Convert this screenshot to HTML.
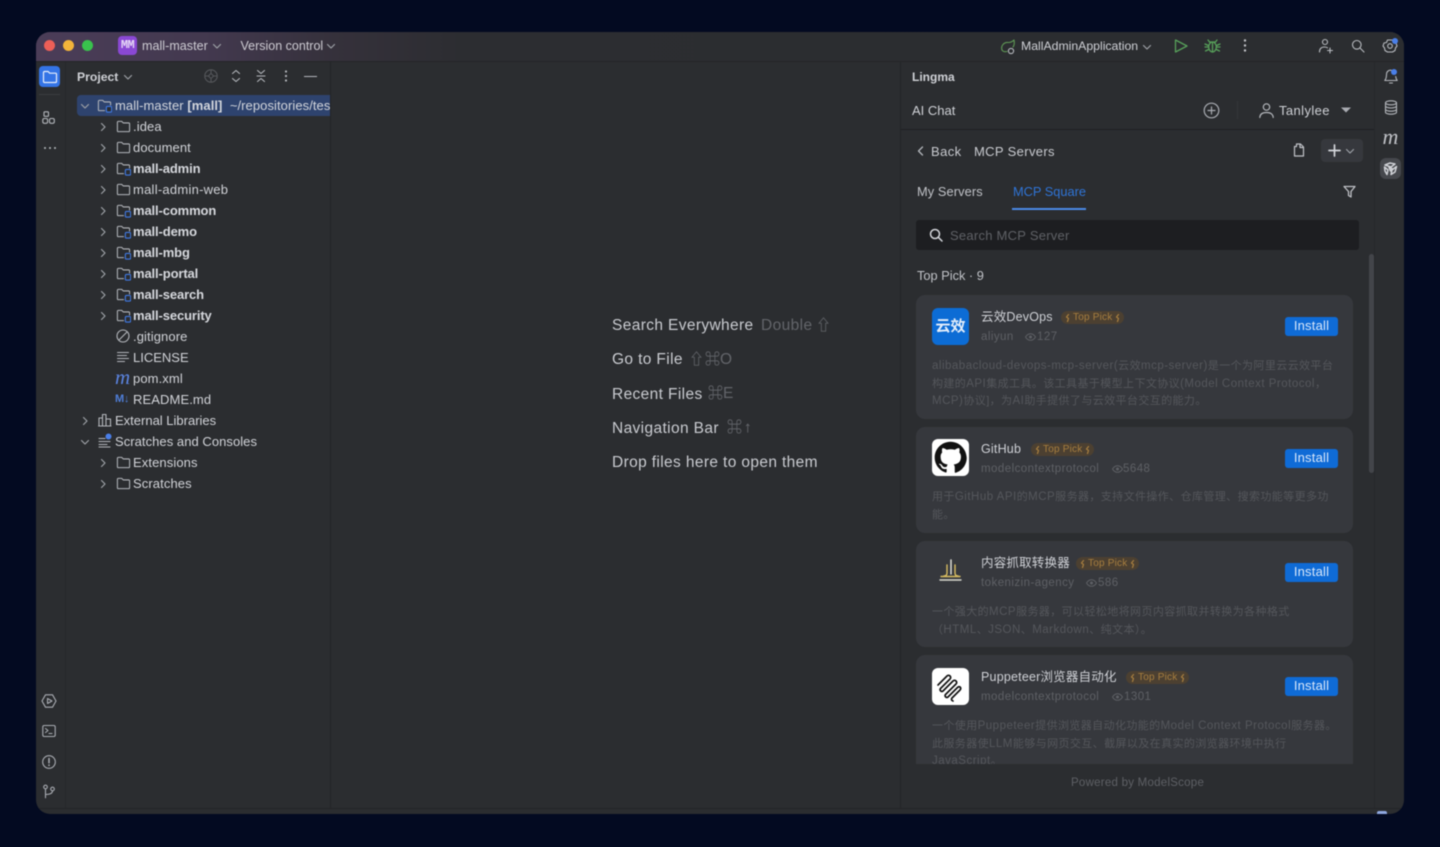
<!DOCTYPE html>
<html lang="en"><head><meta charset="utf-8"><title>mall-master</title>
<style>
html,body{margin:0;padding:0;width:1440px;height:847px;overflow:hidden;background:#030a21}
*{box-sizing:border-box}
body{font-family:"Liberation Sans","Noto Sans CJK SC",sans-serif;color:#d3d5da;font-size:13px}
#w{position:absolute;left:36px;top:32px;width:1368px;height:782px;border-radius:14px;background:#2b2d30;overflow:hidden;filter:blur(.4px)}
.a{position:absolute;white-space:nowrap}
.t{position:absolute;white-space:nowrap;line-height:18px;height:18px}
svg{position:absolute;overflow:visible;fill:none;stroke-linecap:round;stroke-linejoin:round}
.line{position:absolute;background:#1e1f22}
.row{position:absolute;height:21px;line-height:21px;white-space:nowrap;font-size:13px;letter-spacing:.1px;color:#d1d3d8}
.b{font-weight:700;color:#d6d8dd;letter-spacing:-.12px}
.card{position:absolute;left:880px;width:437px;background:#36383d;border-radius:9px}
.logo{position:absolute;left:16px;top:13px;width:37px;height:37px;border-radius:6px;background:#fff;overflow:hidden}
.nm{position:absolute;left:65px;top:13px;line-height:18px;font-size:12.5px;letter-spacing:.2px;color:#cfd1d6;white-space:nowrap}
.pk{position:absolute;top:16px;width:63px;height:13px;border-radius:7px;background:#4c4031;color:#a77e3f;font-size:10px;line-height:13px;padding-left:12px;letter-spacing:.2px;white-space:nowrap}
.pk svg{top:2.5px}
.sub{position:absolute;left:65px;top:34px;line-height:16px;font-size:11.5px;letter-spacing:.45px;color:#5e6065;white-space:nowrap}
.vw{position:absolute;top:34px;line-height:16px;font-size:11.5px;letter-spacing:.45px;color:#5e6065;white-space:nowrap}
.eye{top:38px}
.ins{position:absolute;left:369px;top:22px;width:53px;height:19px;background:#0f6bd6;border-radius:3px;color:#d9e8fb;font-size:13px;line-height:18.5px;text-align:center;letter-spacing:.2px}
.d{position:absolute;left:16px;top:63px;font-size:11px;line-height:17.5px;letter-spacing:.4px;color:#55575c;white-space:nowrap}
.d i{font-style:normal;font-size:11.5px;letter-spacing:.5px}
.k{position:absolute;color:#63656a;font-size:15.5px;line-height:20px;letter-spacing:.4px;white-space:nowrap}
.g{position:absolute;color:#63656a;font-size:15px;line-height:20px;-webkit-text-stroke:.2px #63656a}
.wl{position:absolute;left:576px;font-size:15.5px;letter-spacing:.37px;line-height:20px;color:#c9cbd0;white-space:nowrap}
</style></head><body>
<svg width="0" height="0" style="position:absolute">
<defs>
<symbol id="f" viewBox="0 0 16 16"><path d="M1.5 3.500a1 1 0 0 1 1-1h3.600l1.600 1.700h5.800a1 1 0 0 1 1 1v7.300a1 1 0 0 1-1 1h-11a1 1 0 0 1-1-1z" fill="none" stroke="#b4b7bc" stroke-width="1.100"/></symbol>
<symbol id="m" viewBox="0 0 16 16"><path d="M8 13.500H2.500a1 1 0 0 1-1-1v-9a1 1 0 0 1 1-1h3.600l1.600 1.700h5.800a1 1 0 0 1 1 1v2.300" fill="none" stroke="#b4b7bc" stroke-width="1.100"/><rect x="10" y="9" width="5.600" height="6" rx="1.200" fill="#2b2d30" stroke="#3f78e0" stroke-width="1.200"/></symbol>
<symbol id="r" viewBox="0 0 10 10"><path d="M3.500 1.500 7 5 3.500 8.500" fill="none" stroke="#9da0a6" stroke-width="1.200"/></symbol>
<symbol id="dn" viewBox="0 0 10 10"><path d="M1.500 3.500 5 7l3.500-3.500" fill="none" stroke="#9da0a6" stroke-width="1.200"/></symbol>
<symbol id="e" viewBox="0 0 11 8"><path d="M.5 4C2 1.500 3.500.7 5.500.7S9 1.500 10.500 4C9 6.500 7.500 7.300 5.500 7.300S2 6.500.5 4z" fill="none" stroke="#5e6065"/><circle cx="5.500" cy="4" r="1.500" fill="#5e6065"/></symbol>
<symbol id="fl" viewBox="0 0 6 8"><path d="M3.500.5 1.500 3l2 1.500-1 3" fill="none" stroke="#a77e3f" stroke-width="1.200"/></symbol>
</defs></svg>
<div id="w">
<!-- title bar -->
<div class="a" style="left:0;top:0;width:1368px;height:29px;background:linear-gradient(90deg,#4b3d58 0,#43394f 170px,#35313b 300px,#2c2d31 430px,#2b2d30 100%)"></div>
<div class="line" style="left:0;top:29px;width:1368px;height:1px;background:#242528"></div>
<div class="a" style="left:8px;top:8px;width:11px;height:11px;border-radius:50%;background:#ec5f57"></div>
<div class="a" style="left:27px;top:8px;width:11px;height:11px;border-radius:50%;background:#f3b43a"></div>
<div class="a" style="left:46px;top:8px;width:11px;height:11px;border-radius:50%;background:#39c24d"></div>
<div class="a" style="left:82px;top:4px;width:19px;height:19px;border-radius:4px;background:#8a48d4;color:#e6d8f6;font:700 12px/19px 'Liberation Mono',monospace;text-align:center;letter-spacing:-.6px">MM</div>
<div class="t" style="left:106px;top:5px;font-size:12.5px;color:#cdcbd2;letter-spacing:.05px">mall-master</div>
<svg style="left:176px;top:9px" width="10" height="10"><use href="#dn"/></svg>
<div class="t" style="left:204.500px;top:5px;font-size:12.5px;color:#cdcbd2;letter-spacing:0">Version control</div>
<svg style="left:290px;top:9px" width="10" height="10"><use href="#dn"/></svg>
<svg style="left:964px;top:7px" width="16" height="16" viewBox="0 0 16 16" stroke="#5f9a55" stroke-width="1.100"><path d="M2 11C.5 7 4 3 8 3.500 10 3.600 12 3 14 1c.8 4-.2 6-1 7"/><circle cx="11" cy="12" r="2.600" stroke="#b4b7bc"/><path d="M2 11c1 1.500 3 2 5 1.500"/></svg>
<div class="t" style="left:985px;top:5px;font-size:12.25px;color:#cfd1d6">MallAdminApplication</div>
<svg style="left:1106px;top:10px" width="10" height="10"><use href="#dn"/></svg>
<svg style="left:1137px;top:6px" width="16" height="16" viewBox="0 0 16 16" stroke="#57a05a" stroke-width="1.300"><path d="M2.500 2v12L14 8z"/></svg>
<svg style="left:1168px;top:6px" width="17" height="16" viewBox="0 0 17 16" stroke="#57a05a" stroke-width="1.300"><ellipse cx="8.500" cy="9" rx="3.800" ry="5"/><path d="M5.500 4 4 2m7.500 2L13 2M8.500 4v10M1 6l3.500 1.500M16 6l-3.500 1.500M1 9h3.500M16 9h-3.500M1.500 13l3-1.500M15.500 13l-3-1.500M6 4h5"/></svg>
<svg style="left:1205px;top:6px" width="8" height="16"><circle cx="4" cy="2.500" r="1.200" fill="#c0c2c7"/><circle cx="4" cy="7.500" r="1.200" fill="#c0c2c7"/><circle cx="4" cy="12.500" r="1.200" fill="#c0c2c7"/></svg>
<svg style="left:1282px;top:6px" width="16" height="16" viewBox="0 0 16 16" stroke="#b8bbc0" stroke-width="1.100"><circle cx="7" cy="4" r="2.500"/><path d="M1.500 14c0-3 1.500-5 5-5 1 0 2 .2 3 .8M12 10v5M9.500 12.500h5"/></svg>
<svg style="left:1313.500px;top:6px" width="16" height="16" viewBox="0 0 16 16" stroke="#b8bbc0" stroke-width="1.100"><circle cx="6.800" cy="6.800" r="4.300"/><path d="m10 10 4 4"/></svg>
<svg style="left:1346px;top:6px" width="16" height="16" viewBox="0 0 16 16" stroke="#b8bbc0" stroke-width="1.100"><path d="M5.500 2h5l1 2.500 2.500.5 1 3-1.500 2-.5 2.500-2.500 1.500h-5L3 12.500 2.500 10 1 8l1-3 2.500-.5z"/><circle cx="8" cy="8" r="2.300"/></svg>
<div class="a" style="left:1356px;top:6px;width:6px;height:6px;border-radius:50%;background:#4a7fe8"></div>

<!-- left strip -->
<div class="line" style="left:29px;top:30px;width:1px;height:746px;background:#26282b"></div>
<div class="a" style="left:3px;top:34px;width:21px;height:21px;border-radius:4px;background:#3474e6"></div>
<svg style="left:5.500px;top:36.500px" width="16" height="16" viewBox="0 0 16 16"><path d="M1.500 3.500a1 1 0 0 1 1-1h3.600l1.600 1.700h5.800a1 1 0 0 1 1 1v7.300a1 1 0 0 1-1 1h-11a1 1 0 0 1-1-1z" stroke="#e8effc" stroke-width="1.200"/></svg>
<div class="a" style="left:3px;top:62px;width:21px;height:1px;background:#3a3c40"></div>
<svg style="left:6px;top:79px" width="14" height="14" viewBox="0 0 14 14" stroke="#b4b7bc" stroke-width="1.100"><rect x="2" y=".8" width="4.500" height="4.500" rx=".8"/><rect x=".8" y="7.500" width="4.800" height="4.800" rx="1.500"/><rect x="7.500" y="7.500" width="4.800" height="4.800" rx="1.500"/></svg>
<svg style="left:7px;top:113px" width="14" height="6"><circle cx="2" cy="3" r="1" fill="#b4b7bc"/><circle cx="7" cy="3" r="1" fill="#b4b7bc"/><circle cx="12" cy="3" r="1" fill="#b4b7bc"/></svg>
<svg style="left:5px;top:661px" width="16" height="16" viewBox="0 0 16 16" stroke="#a9acb2" stroke-width="1.100"><path d="M4.500 1.800h7L15 8l-3.500 6.200h-7L1 8z"/><path d="M6.500 5.500v5L11 8z"/></svg>
<svg style="left:6px;top:692px" width="14" height="14" viewBox="0 0 14 14" stroke="#a9acb2" stroke-width="1.100"><rect x=".8" y="1.500" width="12.400" height="11" rx="1.500"/><path d="m3.500 4.500 2.500 2-2.500 2M7 9.500h3"/></svg>
<svg style="left:5px;top:722px" width="16" height="16" viewBox="0 0 16 16" stroke="#a9acb2" stroke-width="1.100"><circle cx="8" cy="8" r="6.300"/><path d="M8 4.500v4.300M8 11v.4" stroke-width="1.500"/></svg>
<svg style="left:6px;top:752px" width="14" height="16" viewBox="0 0 14 16" stroke="#a9acb2" stroke-width="1.100"><circle cx="3.500" cy="3" r="1.800"/><circle cx="10.500" cy="5" r="1.800"/><path d="M3.500 4.800v9M3.500 10.500c3 0 7-.5 7-3.700"/></svg>

<!-- project panel -->
<div class="t" style="left:41px;top:36px;font-size:12.2px;font-weight:700;color:#cfd1d6">Project</div>
<svg style="left:87px;top:40px" width="10" height="10"><use href="#dn"/></svg>
<svg style="left:168px;top:37px" width="14" height="14" viewBox="0 0 14 14" stroke="#55575b" stroke-width="1.100"><circle cx="7" cy="7" r="6.200"/><circle cx="7" cy="7" r="2"/><path d="M7 1v4M7 9v4M1 7h4M9 7h4"/></svg>
<svg style="left:195px;top:37px" width="10" height="14" viewBox="0 0 10 14" stroke="#b4b7bc" stroke-width="1.100"><path d="m1.500 4.500 3.500-3 3.500 3M1.500 9.500l3.500 3 3.500-3"/></svg>
<svg style="left:219.500px;top:37px" width="10" height="14" viewBox="0 0 10 14" stroke="#b4b7bc" stroke-width="1.100"><path d="m1.500 1.500 3.500 3 3.500-3M1.500 12.500l3.500-3 3.500 3M1 7h8"/></svg>
<svg style="left:245.500px;top:37px" width="8" height="14"><circle cx="4" cy="2.500" r="1.100" fill="#b4b7bc"/><circle cx="4" cy="7" r="1.100" fill="#b4b7bc"/><circle cx="4" cy="11.500" r="1.100" fill="#b4b7bc"/></svg>
<div class="a" style="left:268px;top:44px;width:13px;height:1px;background:#b4b7bc"></div>
<div class="line" style="left:294px;top:30px;width:1px;height:746px;background:#232427"></div>

<div class="a" style="left:41px;top:63px;width:253px;height:21px;background:#2e436e;border-radius:4px 0 0 4px"></div>
<svg style="left:43.500px;top:69px" width="10" height="10"><use href="#dn"/></svg>
<svg style="left:61px;top:66px" width="15" height="15"><use href="#m"/></svg>
<div class="a" style="left:79px;top:63px;width:215px;height:21px;line-height:21px;overflow:hidden;font-size:13px;letter-spacing:.07px;color:#d3d6dc;white-space:nowrap">mall-master <b>[mall]</b>&nbsp; ~/repositories/test</div>

<svg style="left:61.500px;top:90px" width="10" height="10"><use href="#r"/></svg><svg style="left:80px;top:87px" width="15" height="15"><use href="#f"/></svg><div class="row" style="left:97px;top:84px">.idea</div>
<svg style="left:61.500px;top:111px" width="10" height="10"><use href="#r"/></svg><svg style="left:80px;top:108px" width="15" height="15"><use href="#f"/></svg><div class="row" style="left:97px;top:105px">document</div>
<svg style="left:61.500px;top:132px" width="10" height="10"><use href="#r"/></svg><svg style="left:80px;top:129px" width="15" height="15"><use href="#m"/></svg><div class="row b" style="left:97px;top:126px">mall-admin</div>
<svg style="left:61.500px;top:153px" width="10" height="10"><use href="#r"/></svg><svg style="left:80px;top:150px" width="15" height="15"><use href="#f"/></svg><div class="row" style="left:97px;top:147px;letter-spacing:.25px">mall-admin-web</div>
<svg style="left:61.500px;top:174px" width="10" height="10"><use href="#r"/></svg><svg style="left:80px;top:171px" width="15" height="15"><use href="#m"/></svg><div class="row b" style="left:97px;top:168px">mall-common</div>
<svg style="left:61.500px;top:195px" width="10" height="10"><use href="#r"/></svg><svg style="left:80px;top:192px" width="15" height="15"><use href="#m"/></svg><div class="row b" style="left:97px;top:189px">mall-demo</div>
<svg style="left:61.500px;top:216px" width="10" height="10"><use href="#r"/></svg><svg style="left:80px;top:213px" width="15" height="15"><use href="#m"/></svg><div class="row b" style="left:97px;top:210px">mall-mbg</div>
<svg style="left:61.500px;top:237px" width="10" height="10"><use href="#r"/></svg><svg style="left:80px;top:234px" width="15" height="15"><use href="#m"/></svg><div class="row b" style="left:97px;top:231px">mall-portal</div>
<svg style="left:61.500px;top:258px" width="10" height="10"><use href="#r"/></svg><svg style="left:80px;top:255px" width="15" height="15"><use href="#m"/></svg><div class="row b" style="left:97px;top:252px">mall-search</div>
<svg style="left:61.500px;top:279px" width="10" height="10"><use href="#r"/></svg><svg style="left:80px;top:276px" width="15" height="15"><use href="#m"/></svg><div class="row b" style="left:97px;top:273px">mall-security</div>
<svg style="left:80px;top:297px" width="14" height="14" viewBox="0 0 14 14" stroke="#b4b7bc" stroke-width="1.100"><circle cx="7" cy="7" r="6"/><path d="m3 11 8-8"/></svg><div class="row" style="left:97px;top:294px">.gitignore</div>
<svg style="left:81px;top:319px" width="12" height="12" viewBox="0 0 12 12" stroke="#b4b7bc" stroke-width="1.100"><path d="M.5 1.500h11M.5 4.500h9M.5 7.500h11M.5 10.500h7"/></svg><div class="row" style="left:97px;top:315px;letter-spacing:0">LICENSE</div>
<div class="a" style="left:79px;top:335px;font:italic 21px/20px 'Liberation Serif',serif;color:#5b84e0;letter-spacing:-.5px">m</div><div class="row" style="left:97px;top:336px">pom.xml</div>
<div class="a" style="left:79px;top:357px;line-height:21px;font-size:11px;font-weight:700;color:#4f7ed8;letter-spacing:-.3px">M↓</div><div class="row" style="left:97px;top:357px">README.md</div>
<svg style="left:43.500px;top:384px" width="10" height="10"><use href="#r"/></svg>
<svg style="left:62px;top:381px" width="14" height="14" viewBox="0 0 14 14" stroke="#b4b7bc" stroke-width="1.100"><path d="M1 13V5h3.500v8zM4.500 13V1.500H8V13zM8 13V6h4.500v7zM.5 13h12.500"/></svg><div class="row" style="left:79px;top:378px;letter-spacing:0">External Libraries</div>
<svg style="left:43.500px;top:405px" width="10" height="10"><use href="#dn"/></svg>
<svg style="left:62px;top:401px" width="14" height="15" viewBox="0 0 14 15" stroke="#b4b7bc" stroke-width="1.100"><path d="M1 5.500h6M1 8.500h11M1 11.500h8M1 14h11"/><circle cx="10.500" cy="3.500" r="3" fill="#4a7fe8" stroke="none"/></svg><div class="row" style="left:79px;top:399px;letter-spacing:.05px">Scratches and Consoles</div>
<svg style="left:61.500px;top:426px" width="10" height="10"><use href="#r"/></svg><svg style="left:80px;top:423px" width="15" height="15"><use href="#f"/></svg><div class="row" style="left:97px;top:420px">Extensions</div>
<svg style="left:61.500px;top:447px" width="10" height="10"><use href="#r"/></svg><svg style="left:80px;top:444px" width="15" height="15"><use href="#f"/></svg><div class="row" style="left:97px;top:441px">Scratches</div>

<!-- editor -->
<div class="wl" style="top:284px">Search Everywhere</div><div class="k" style="left:725px;top:284px">Double</div><div class="g" style="left:780px;top:284px">⇧</div>
<div class="wl" style="top:318px">Go to File</div><div class="g" style="left:653px;top:318px">⇧</div><div class="g" style="left:669px;top:318px">⌘</div><div class="k" style="left:684px;top:318px">O</div>
<div class="wl" style="top:353px">Recent Files</div><div class="g" style="left:672px;top:352px">⌘</div><div class="k" style="left:687px;top:352px">E</div>
<div class="wl" style="top:387px">Navigation Bar</div><div class="g" style="left:691px;top:386px">⌘</div><div class="g" style="left:708px;top:386px">↑</div>
<div class="wl" style="top:421px">Drop files here to open them</div>

<!-- lingma -->
<div class="line" style="left:864px;top:30px;width:1px;height:746px;background:#232427"></div>
<div class="t" style="left:876px;top:36px;font-size:12px;font-weight:700;color:#cfd1d6">Lingma</div>
<div class="t" style="left:876px;top:70px;font-size:13px;color:#cfd1d6;letter-spacing:0">AI Chat</div>
<svg style="left:1167px;top:70px" width="17" height="17" viewBox="0 0 17 17" stroke="#a9acb2" stroke-width="1.200"><circle cx="8.500" cy="8.500" r="7.300"/><path d="M8.500 5v7M5 8.500h7"/></svg>
<div class="a" style="left:1201px;top:69px;width:1px;height:18px;background:#333538"></div>
<svg style="left:1221.500px;top:70px" width="17" height="17" viewBox="0 0 17 17" stroke="#b4b7bc" stroke-width="1.200"><circle cx="8.500" cy="5" r="3.200"/><path d="M1.800 15.500c.2-3 2-5 6.700-5s6.500 2 6.700 5"/></svg>
<div class="t" style="left:1243px;top:70px;font-size:13px;color:#cfd1d6;letter-spacing:.4px">Tanlylee</div>
<svg style="left:1305px;top:75px" width="11" height="7"><path d="M0 .5h10L5 5.500z" fill="#a9acb2"/></svg>
<div class="a" style="left:865px;top:97px;width:473px;height:1px;background:#1f2023"></div>
<svg style="left:880px;top:113px" width="10" height="12" viewBox="0 0 10 12" stroke="#b4b7bc" stroke-width="1.300"><path d="M6.500 2 2.500 6l4 4"/></svg>
<div class="t" style="left:895px;top:111px;font-size:13px;color:#c9cbd0;letter-spacing:.4px">Back</div>
<div class="t" style="left:938px;top:111px;font-size:13px;color:#c9cbd0;letter-spacing:.35px">MCP Servers</div>
<svg style="left:1255.500px;top:110px" width="15" height="16" viewBox="0 0 15 16" stroke="#c0c2c7" stroke-width="1.200"><path d="M2.500 4.500h2V2h4l3 3v9h-9zM8 2v3.500h3.500"/></svg>
<div class="a" style="left:1285px;top:107px;width:42px;height:23px;background:#36383d;border-radius:4px"></div>
<svg style="left:1291.500px;top:112px" width="13" height="13" stroke="#d4d6db" stroke-width="1.700"><path d="M6.500 1v11M1 6.500h11"/></svg>
<svg style="left:1309px;top:114px" width="10" height="10"><use href="#dn"/></svg>
<div class="t" style="left:881px;top:151px;font-size:12.8px;color:#c1c3c8;letter-spacing:.1px">My Servers</div>
<div class="t" style="left:977px;top:151px;font-size:12.8px;color:#2f74d6;letter-spacing:0">MCP Square</div>
<div class="a" style="left:976px;top:176px;width:74px;height:2px;background:#4a8ae6"></div>
<svg style="left:1307px;top:153px" width="13" height="13" viewBox="0 0 13 13" stroke="#c0c2c7" stroke-width="1.300"><path d="M1 1.500h11L8 6.500V12L5.500 10.500v-4z"/></svg>

<div class="a" style="left:880px;top:188px;width:443px;height:30px;background:#1d1e21;border-radius:3px"></div>
<svg style="left:892px;top:195px" width="16" height="16" viewBox="0 0 16 16" stroke="#d4d6db" stroke-width="1.500"><circle cx="7" cy="7" r="4.500"/><path d="m10.500 10.500 3.500 3.500"/></svg>
<div class="t" style="left:914px;top:194.500px;font-size:13px;color:#5f6166;letter-spacing:.25px">Search MCP Server</div>
<div class="t" style="left:881px;top:234.500px;font-size:12.8px;color:#c1c3c8;letter-spacing:0">Top Pick · 9</div>
<div class="a" style="left:1333px;top:222px;width:5px;height:219px;background:#43454a;border-radius:3px"></div>

<!-- card 1 -->
<div class="card" style="top:263px;height:124px">
<div class="logo" style="background:#0c6cd5;color:#e3eefb;font-size:15px;font-weight:700;line-height:38px;text-align:center;letter-spacing:0">云效</div>
<div class="nm">云效DevOps</div><div class="pk" style="left:145px"><svg style="left:4px" width="6" height="8"><use href="#fl"/></svg>Top Pick<svg style="left:54px" width="6" height="8"><use href="#fl"/></svg></div>
<div class="sub">aliyun</div>
<svg class="eye" style="left:109px" width="11" height="8"><use href="#e"/></svg>
<div class="vw" style="left:121px">127</div>
<div class="ins">Install</div>
<div class="d"><i>alibabacloud-devops-mcp-server(</i>云效<i>mcp-server)</i>是一个为阿里云云效平台<br>构建的<i>API</i>集成工具。该工具基于模型上下文协议<i>(Model Context Protocol，</i><br><i>MCP)</i>协议]，为<i>AI</i>助手提供了与云效平台交互的能力。</div>
</div>
<!-- card 2 -->
<div class="card" style="top:395px;height:106px">
<div class="logo" style="top:12px"><svg style="left:2px;top:2px" width="33" height="33" viewBox="0 0 24 24"><path fill="#111" d="M12 .5C5.600.5.500 5.700.500 12c0 5.100 3.300 9.400 7.900 10.900.6.100.8-.2.800-.6v-2c-3.200.7-3.900-1.400-3.900-1.400-.5-1.300-1.300-1.700-1.300-1.700-1-.7.100-.7.100-.7 1.200.1 1.800 1.200 1.800 1.200 1 1.800 2.700 1.300 3.400 1 .1-.8.400-1.300.7-1.600-2.600-.3-5.200-1.300-5.200-5.700 0-1.300.4-2.300 1.200-3.100-.1-.3-.5-1.500.1-3.100 0 0 1-.3 3.200 1.200a11 11 0 0 1 5.800 0c2.200-1.500 3.200-1.200 3.200-1.200.6 1.600.2 2.800.1 3.100.7.800 1.200 1.800 1.200 3.100 0 4.400-2.700 5.400-5.300 5.700.4.400.8 1.100.8 2.200v3.200c0 .4.200.7.800.6 4.600-1.500 7.900-5.800 7.900-10.900C23.500 5.700 18.400.5 12 .5z"/></svg></div>
<div class="nm">GitHub</div><div class="pk" style="left:115px"><svg style="left:4px" width="6" height="8"><use href="#fl"/></svg>Top Pick<svg style="left:54px" width="6" height="8"><use href="#fl"/></svg></div>
<div class="sub">modelcontextprotocol</div>
<svg class="eye" style="left:196px" width="11" height="8"><use href="#e"/></svg>
<div class="vw" style="left:207px">5648</div>
<div class="ins" style="top:21.500px">Install</div>
<div class="d" style="top:62px">用于<i>GitHub API</i>的<i>MCP</i>服务器，支持文件操作、仓库管理、搜索功能等更多功<br>能。</div>
</div>
<!-- card 3 -->
<div class="card" style="top:509px;height:106px">
<div class="logo" style="background:transparent"><svg style="left:0;top:0" width="37" height="37" viewBox="0 0 37 37" stroke-width="1.400"><path d="M8 26h21" stroke="#d9d9d0"/><path d="M9 22.500h19" stroke="#d8bd62"/><path d="M15 11v8c0 2-1 3-3 3M23 11v8c0 2 1 3 3 3" stroke="#d8bd62"/><path d="M19 6v14" stroke="#e6e6df"/></svg></div>
<div class="nm">内容抓取转换器</div><div class="pk" style="left:160px"><svg style="left:4px" width="6" height="8"><use href="#fl"/></svg>Top Pick<svg style="left:54px" width="6" height="8"><use href="#fl"/></svg></div>
<div class="sub">tokenizin-agency</div>
<svg class="eye" style="left:170px" width="11" height="8"><use href="#e"/></svg>
<div class="vw" style="left:182px">586</div>
<div class="ins">Install</div>
<div class="d">一个强大的<i>MCP</i>服务器，可以轻松地将网页内容抓取并转换为各种格式<br>（<i>HTML</i>、<i>JSON</i>、<i>Markdown</i>、纯文本）。</div>
</div>
<!-- card 4 -->
<div class="a" style="left:880px;top:623px;width:437px;height:109px;overflow:hidden">
<div class="card" style="left:0;top:0;height:140px">
<div class="logo"><svg style="left:0;top:0" width="37" height="37" viewBox="0 0 37 37" stroke="#111" stroke-width="1.700"><path d="M6 17 15 8c2-2 5 1 3 3L8.500 20.500c-1.500 1.500 1 4 2.500 2.500L21 13c2-2 5 1 3 3L13.500 26.500c-1.500 1.500 1 4 2.500 2.500l9.500-9.500c2-2 4.500 .5 2.500 2.500L20 30c-1 1-.5 2.500 1 3"/></svg></div>
<div class="nm">Puppeteer浏览器自动化</div><div class="pk" style="left:210px"><svg style="left:4px" width="6" height="8"><use href="#fl"/></svg>Top Pick<svg style="left:54px" width="6" height="8"><use href="#fl"/></svg></div>
<div class="sub">modelcontextprotocol</div>
<svg class="eye" style="left:196px" width="11" height="8"><use href="#e"/></svg>
<div class="vw" style="left:208px">1301</div>
<div class="ins">Install</div>
<div class="d">一个使用<i>Puppeteer</i>提供浏览器自动化功能的<i>Model Context Protocol</i>服务器。<br>此服务器使<i>LLM</i>能够与网页交互、截屏以及在真实的浏览器环境中执行<br><i>JavaScript</i>。</div>
</div></div>
<div class="t" style="left:1035px;top:742px;font-size:11.5px;color:#5e6065;letter-spacing:.25px">Powered by ModelScope</div>

<!-- right strip -->
<div class="line" style="left:1338px;top:30px;width:1px;height:746px;background:#26282b"></div>
<svg style="left:1347px;top:36px" width="16" height="17" viewBox="0 0 16 17" stroke="#b4b7bc" stroke-width="1.100"><path d="M9 2.500C6 1.500 3.500 3.500 3.500 6.500c0 3-.5 4.500-1.700 6h12.400c-.9-1.200-1.300-2.300-1.500-4M6.500 15h3"/></svg>
<div class="a" style="left:1355px;top:37px;width:6px;height:6px;border-radius:50%;background:#4a7fe8"></div>
<svg style="left:1348px;top:68px" width="14" height="15" viewBox="0 0 14 15" stroke="#b4b7bc" stroke-width="1.100"><ellipse cx="7" cy="2.800" rx="5.500" ry="2"/><path d="M1.500 2.800v9.400c0 1.100 2.500 2 5.500 2s5.500-.9 5.500-2V2.800M1.500 6c0 1.100 2.500 2 5.500 2s5.500-.9 5.500-2M1.500 9.200c0 1.100 2.500 2 5.500 2s5.500-.9 5.500-2"/></svg>
<div class="a" style="left:1346.500px;top:93px;font:italic 22px/24px 'Liberation Serif',serif;color:#c0c2c7;letter-spacing:-.5px">m</div>
<div class="a" style="left:1344px;top:126px;width:21px;height:21px;background:#46484d;border-radius:6px"></div>
<svg style="left:1347px;top:129px" width="15" height="15" viewBox="0 0 15 15" stroke="#d0d2d7" stroke-width="1.500"><path d="M2 4 7 2l5 1-4 3zM1.500 6 5 9l-1 4.500L2 10zM13.500 5.500 12 11l-4 2.500 1-4.500zM6 6.500l3 1-1.500 2.500z"/></svg>

<!-- status bar -->
<div class="a" style="left:0;top:776px;width:1368px;height:1px;background:#232427"></div>
<div class="a" style="left:1341px;top:779px;width:10px;height:3px;background:#8fa8e0;border-radius:2px 2px 0 0"></div>
</div>
</body></html>
